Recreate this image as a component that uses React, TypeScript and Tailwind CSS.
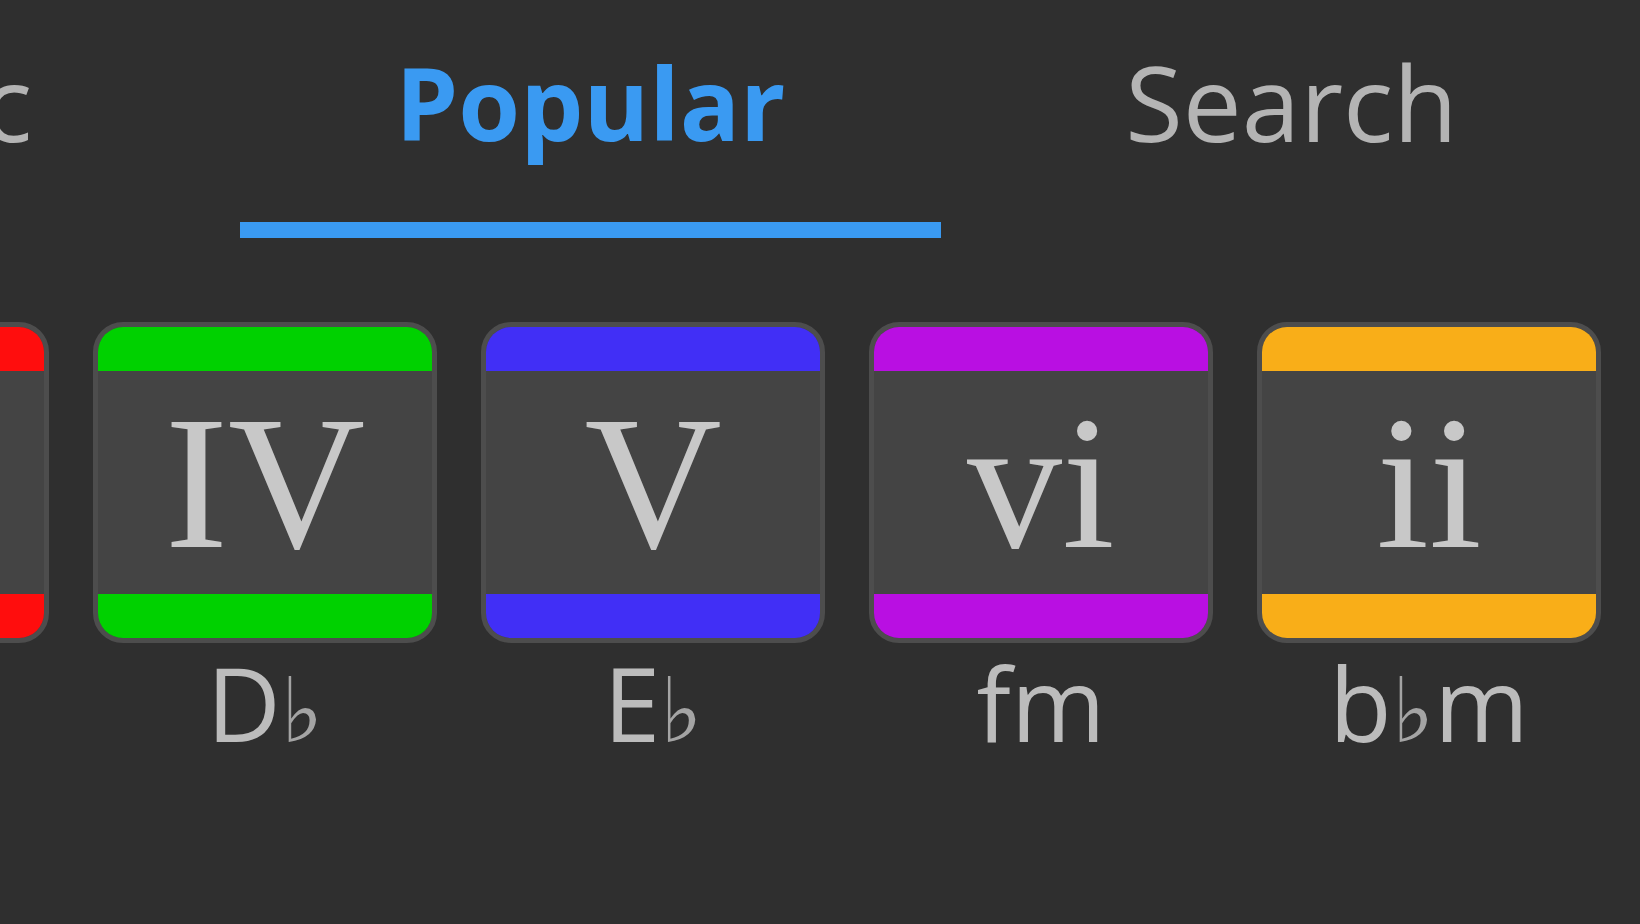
const tabs = [
  { label: "Music", active: false },
  { label: "Popular", active: true },
  { label: "Search", active: false },
];

interface Chord {
  numeral: string;
  root: string;
  flat?: boolean;
  suffix?: string;
  band: string;
}

const chords: Chord[] = [
  { numeral: "I", root: "A", flat: true, band: "bg-[#ff0d0d]" },
  { numeral: "IV", root: "D", flat: true, band: "bg-[#00d100]" },
  { numeral: "V", root: "E", flat: true, band: "bg-[#412ff6]" },
  { numeral: "vi", root: "f", suffix: "m", band: "bg-[#b90fe2]" },
  { numeral: "ii", root: "b", flat: true, suffix: "m", band: "bg-[#f9ae18]" },
];

function ChordCard({ chord }: { chord: Chord }) {
  return (
    <div className="flex flex-col items-center w-[344px] shrink-0">
      <div className="w-[344px] h-[321px] rounded-[30px] border-[5px] border-[#4d4d4d] bg-[#444444] overflow-hidden flex flex-col">
        <div className={`h-[44px] ${chord.band}`} />
        <div className="flex-1 flex items-center justify-center">
          <span className="font-['Liberation_Serif',serif] text-[190px] leading-none text-[#c8c8c8]">
            {chord.numeral}
          </span>
        </div>
        <div className={`h-[44px] ${chord.band}`} />
      </div>
      <div className="mt-[10px] h-[100px] leading-[100px] text-[102px] font-['Open_Sans',sans-serif] text-[#bcbcbc] whitespace-nowrap">
        {chord.root}
        {chord.flat && (
          <span className="font-['DejaVu_Sans',sans-serif] text-[90px] text-[#a4a4a4]">♭</span>
        )}
        {chord.suffix}
      </div>
    </div>
  );
}

export default function App() {
  return (
    <div className="w-[1640px] h-[924px] bg-[#2f2f2f] overflow-hidden">
      {/* tab strip, first tab runs off the left edge */}
      <div className="flex ml-[-461px] pt-[52px]">
        {tabs.map((tab) => (
          <div key={tab.label} className="w-[701px] shrink-0 flex flex-col items-center">
            <div
              className={`h-[100px] leading-[100px] font-['Open_Sans',sans-serif] ${
                tab.active ? "text-[100px] font-bold text-[#3a9af2]" : "text-[105px] text-[#b4b4b4]"
              }`}
            >
              {tab.label}
            </div>
            <div className={`mt-[70px] h-[16px] w-full ${tab.active ? "bg-[#3a9af2]" : ""}`} />
          </div>
        ))}
      </div>

      <div className="flex gap-[44px] ml-[-295px] mt-[84px]">
        {chords.map((c) => (
          <ChordCard key={c.numeral} chord={c} />
        ))}
      </div>
    </div>
  );
}
